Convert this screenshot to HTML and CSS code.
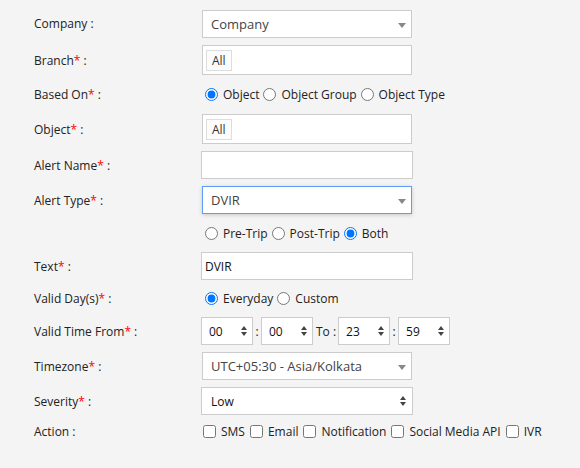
FILE: index.html
```html
<!DOCTYPE html>
<html>
<head>
<meta charset="utf-8">
<link rel="stylesheet" href="styles.css">
</head>
<body>
<div class="form">
  <div class="row h29">
    <div class="label">Company :</div>
    <div class="ctl"><div class="s2"><span>Company</span><i class="caret"></i></div></div>
  </div>
  <div class="row h30">
    <div class="label">Branch<span class="req">*</span> :</div>
    <div class="ctl"><div class="tagbox"><span class="tag">All</span></div></div>
  </div>
  <div class="row h25">
    <div class="label">Based On<span class="req">*</span> :</div>
    <div class="ctl opts">
      <label class="opt"><input type="radio" name="b" checked>Object</label>
      <label class="opt"><input type="radio" name="b">Object Group</label>
      <label class="opt"><input type="radio" name="b">Object Type</label>
    </div>
  </div>
  <div class="row h30">
    <div class="label">Object<span class="req">*</span> :</div>
    <div class="ctl"><div class="tagbox"><span class="tag">All</span></div></div>
  </div>
  <div class="row h28">
    <div class="label">Alert Name<span class="req">*</span> :</div>
    <div class="ctl"><div class="inp"></div></div>
  </div>
  <div class="row h28">
    <div class="label">Alert Type<span class="req">*</span> :</div>
    <div class="ctl"><div class="s2 focus"><span>DVIR</span><i class="caret"></i></div></div>
  </div>
  <div class="row h24">
    <div class="label"></div>
    <div class="ctl opts">
      <label class="opt"><input type="radio" name="t">Pre-Trip</label>
      <label class="opt"><input type="radio" name="t">Post-Trip</label>
      <label class="opt"><input type="radio" name="t" checked>Both</label>
    </div>
  </div>
  <div class="row h28">
    <div class="label">Text<span class="req">*</span> :</div>
    <div class="ctl"><div class="inp">DVIR</div></div>
  </div>
  <div class="row h23">
    <div class="label">Valid Day(s)<span class="req">*</span> :</div>
    <div class="ctl opts">
      <label class="opt"><input type="radio" name="d" checked>Everyday</label>
      <label class="opt"><input type="radio" name="d">Custom</label>
    </div>
  </div>
  <div class="row h28">
    <div class="label">Valid Time From<span class="req">*</span> :</div>
    <div class="ctl time">
      <div class="spin"><span>00</span><i class="ud"><b class="up"></b><b class="dn"></b></i></div>
      <span class="colon">:</span>
      <div class="spin"><span>00</span><i class="ud"><b class="up"></b><b class="dn"></b></i></div>
      <span class="to">To :</span>
      <div class="spin"><span>23</span><i class="ud"><b class="up"></b><b class="dn"></b></i></div>
      <span class="colon">:</span>
      <div class="spin"><span>59</span><i class="ud"><b class="up"></b><b class="dn"></b></i></div>
    </div>
  </div>
  <div class="row h28">
    <div class="label">Timezone<span class="req">*</span> :</div>
    <div class="ctl"><div class="s2"><span>UTC+05:30 - Asia/Kolkata</span><i class="caret"></i></div></div>
  </div>
  <div class="row h28">
    <div class="label">Severity<span class="req">*</span> :</div>
    <div class="ctl"><div class="native"><span>Low</span><i class="ud"><b class="up"></b><b class="dn"></b></i></div></div>
  </div>
  <div class="row h18">
    <div class="label">Action :</div>
    <div class="ctl checks">
      <label class="chk"><input type="checkbox">SMS</label>
      <label class="chk"><input type="checkbox">Email</label>
      <label class="chk"><input type="checkbox">Notification</label>
      <label class="chk"><input type="checkbox">Social Media API</label>
      <label class="chk"><input type="checkbox">IVR</label>
    </div>
  </div>
</div>
</body>
</html>
```

FILE: styles.css
```css
html, body {
  margin: 0;
  padding: 0;
  background: #f4f4f4;
}
body {
  font-family: "Open Sans", "Liberation Sans", sans-serif;
  font-size: 12px;
  color: #222;
  width: 580px;
  height: 468px;
  overflow: hidden;
}
.form {
  display: flex;
  flex-direction: column;
  gap: 7px;
  padding: 9px 0 0 34px;
}
.row {
  display: grid;
  grid-template-columns: 167px auto;
  align-items: center;
  justify-content: start;
}
.h29 { height: 29px; }
.h30 { height: 30px; }
.h28 { height: 28px; }
.h25 { height: 25px; }
.h24 { height: 24px; }
.h23 { height: 23px; }
.h18 { height: 18px; }
.label { white-space: nowrap; }
.row.h29 .label { margin-top: -1px; }
.req { color: #f00; }
.ctl { display: flex; align-items: center; white-space: nowrap; }

.s2 {
  box-sizing: border-box;
  margin-left: 1px;
  width: 210px;
  height: 28px;
  background: #fff;
  border: 1px solid #ccc;
  display: flex;
  align-items: center;
  justify-content: space-between;
  padding: 0 5px 0 8px;
  font-size: 13px;
  color: #444;
}
.s2.focus {
  border-color: #5d9cf8;
  box-shadow: 0 1px 4px rgba(0, 0, 0, 0.18);
}
.caret {
  width: 0;
  height: 0;
  border-style: solid;
  border-width: 5px 4px 0 4px;
  border-color: #888 transparent transparent transparent;
  margin-top: 3px;
}
.tagbox {
  box-sizing: border-box;
  margin-left: 1px;
  width: 210px;
  height: 30px;
  background: #fff;
  border: 1px solid #ccc;
  display: flex;
  align-items: center;
  padding: 0 3px;
}
.tag {
  box-sizing: border-box;
  height: 21px;
  line-height: 19px;
  border: 1px solid #ddd;
  background: #fcfcfc;
  padding: 0 5px;
  color: #333;
}
.inp {
  box-sizing: border-box;
  width: 212px;
  height: 28px;
  background: #fff;
  border: 1px solid #ccc;
  display: flex;
  align-items: center;
  padding-left: 3px;
  color: #111;
}
.native {
  box-sizing: border-box;
  width: 212px;
  height: 28px;
  background: #fff;
  border: 1px solid #ccc;
  display: flex;
  align-items: center;
  justify-content: space-between;
  padding: 0 6px 0 9px;
  color: #111;
}
.ud {
  display: flex;
  flex-direction: column;
  gap: 2px;
}
.up, .dn {
  display: block;
  width: 0;
  height: 0;
  border-style: solid;
}
.up {
  border-width: 0 3px 4px 3px;
  border-color: transparent transparent #444 transparent;
}
.dn {
  border-width: 4px 3px 0 3px;
  border-color: #444 transparent transparent transparent;
}

.opts { gap: 4px; }
.opt, .chk {
  display: flex;
  align-items: center;
  white-space: nowrap;
}
.opt input {
  width: 13px;
  height: 13px;
  margin: 0 5px 0 0;
}
.opts .opt:first-child input { margin-left: 4px; }
.checks { gap: 5px; }
.chk input {
  width: 13px;
  height: 13px;
  margin: 0 5px 0 0;
}
.checks .chk:first-child input { margin-left: 2px; }

.time { gap: 0; }
.spin {
  box-sizing: border-box;
  flex: 0 0 52px;
  width: 52px;
  height: 28px;
  background: #fff;
  border: 1px solid #ccc;
  display: flex;
  align-items: center;
  justify-content: space-between;
  padding: 0 5px 0 7px;
  color: #111;
}
.colon {
  flex: 0 0 8px;
  text-align: center;
}
.to {
  flex: 0 0 auto;
  margin: 0 2px 0 3px;
}
```
